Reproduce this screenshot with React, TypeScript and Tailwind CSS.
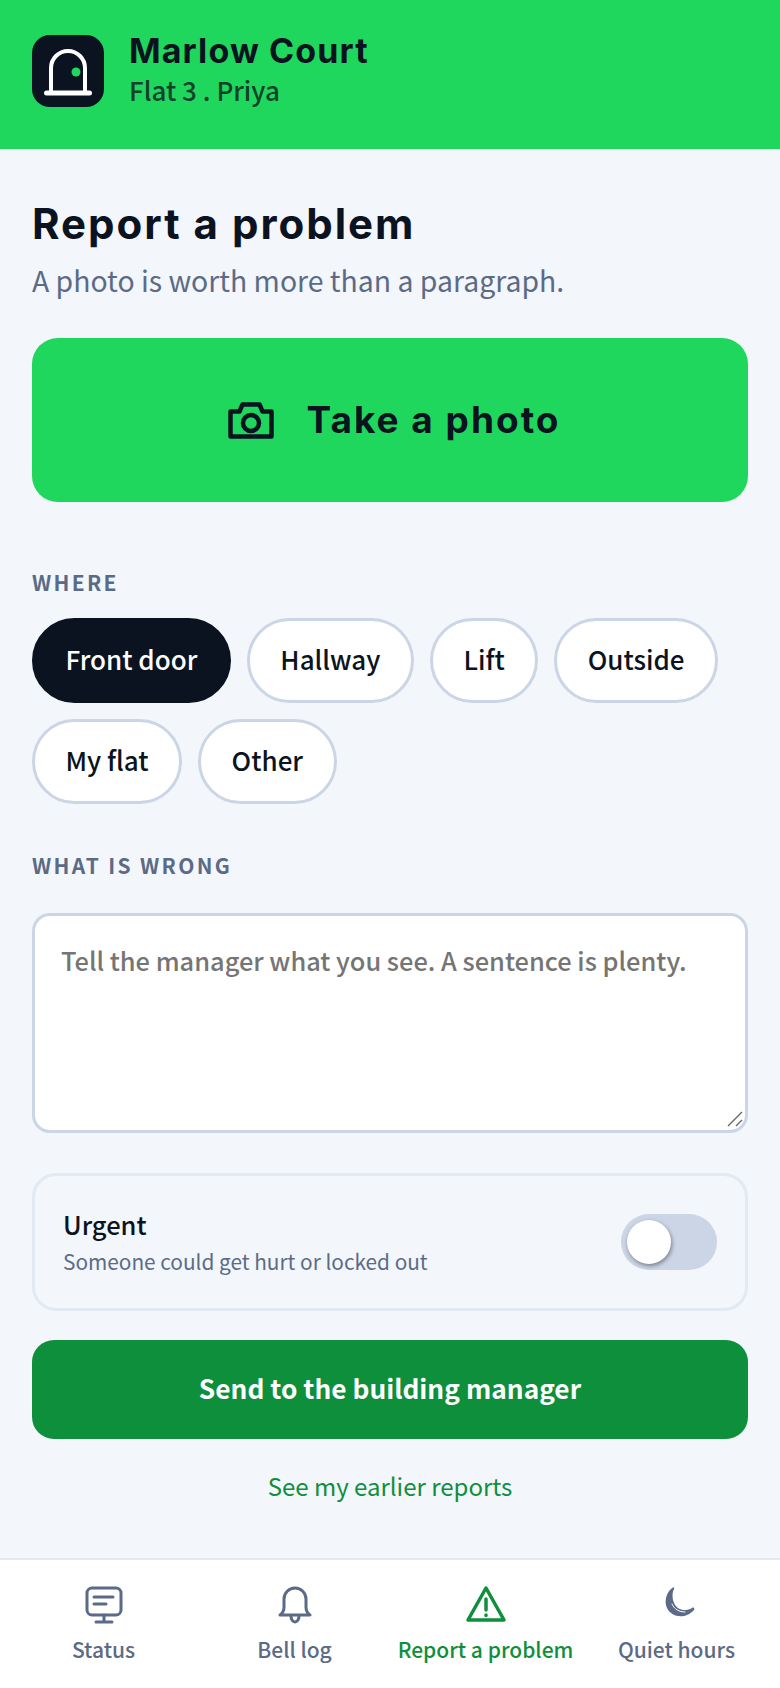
import React from 'react'

const body = { fontFamily: '"Noto Sans CJK SC", "Noto Sans", sans-serif' }

const chips = ['Front door', 'Hallway', 'Lift', 'Outside', 'My flat', 'Other']

function DoorLogo() {
  return (
    <div className="w-[72px] h-[72px] rounded-[18px] bg-[#0b1320] shrink-0">
      <svg width="72" height="72" viewBox="0 0 72 72" fill="none">
        <path d="M19 58V33a17 17 0 0 1 34 0v25" stroke="#fff" strokeWidth="4" />
        <path d="M14.5 58h43" stroke="#fff" strokeWidth="5" strokeLinecap="round" />
        <circle cx="44" cy="37" r="4.5" fill="#20d75e" />
      </svg>
    </div>
  )
}

function Camera() {
  return (
    <svg width="46" height="37" viewBox="0 0 46 37" fill="none" stroke="#0b1320" strokeWidth="4.5" strokeLinejoin="round">
      <path d="M2.5 9.5h9l3-7h17l3 7h9v25h-41z" />
      <circle cx="23" cy="21" r="8" />
    </svg>
  )
}

function StatusIcon() {
  return (
    <svg width="38" height="38" viewBox="0 0 38 38" fill="none" stroke="#5b6b87" strokeWidth="3" strokeLinecap="round" strokeLinejoin="round">
      <rect x="2" y="2" width="34" height="27" rx="5" />
      <path d="M9 11h19M9 18h12M19 29v7M11 36h16" />
    </svg>
  )
}

function BellIcon() {
  return (
    <svg width="34" height="38" viewBox="0 0 34 38" fill="none" stroke="#5b6b87" strokeWidth="3" strokeLinecap="round" strokeLinejoin="round">
      <path d="M2 29c3-2 4-4 4-8v-8a11 11 0 0 1 22 0v8c0 4 1 6 4 8z" />
      <path d="M13 30a4 6 0 0 0 8 0" />
    </svg>
  )
}

function WarnIcon() {
  return (
    <svg className="mb-[2px]" width="42" height="38" viewBox="0 0 42 38" fill="none" stroke="#0e8f3c" strokeWidth="3.5" strokeLinecap="round" strokeLinejoin="round">
      <path d="M21 3 3 35h36z" />
      <path d="M21 14v11M21 30v.5" />
    </svg>
  )
}

function MoonIcon() {
  return (
    <svg className="ml-[6px] mb-[6px]" width="30" height="31" viewBox="0 0 30 31" fill="#5b6b87">
      <path d="M8 .5C1 5-1 15 2 21c4 9 18 12 27 2 1-2-1-3-2-2-7 4-15 2-18-5-2-5-2-10 0-14 .5-1.500 0-2-1-1.500z" />
      <path d="M7 17c2 5 7 8 13 8" stroke="#fff" strokeWidth="1" fill="none" strokeLinecap="round" />
    </svg>
  )
}

function NavItem({ icon, label, active }: { icon: React.ReactNode; label: string; active?: boolean }) {
  return (
    <div className="flex-1 flex flex-col items-center">
      <div className="h-[44px] flex items-center justify-center">{icon}</div>
      <span className={`mt-[8px] text-[21px] leading-[28px] whitespace-nowrap font-medium ${active ? 'text-[#0e8f3c]' : 'text-[#5b6b87]'}`}>
        {label}
      </span>
    </div>
  )
}

export default function App() {
  return (
    <div className="w-[780px] h-[1688px] bg-[#f3f6fb] flex flex-col" style={body}>
      <header className="h-[149px] bg-[#20d75e] flex items-start px-[32px] pt-[35px] gap-[25px] shrink-0">
        <DoorLogo />
        <div className="flex flex-col">
          <h2 className="text-[34px] leading-[40px] font-bold text-[#0b1320] tracking-[1.1px] font-['Inter'] -mt-[4px]">Marlow Court</h2>
          <p className="text-[26px] leading-[32px] font-medium text-[#12432a] mt-[3px]">Flat 3 . Priya</p>
        </div>
      </header>

      <main className="flex-1 px-[32px] pt-[50px] flex flex-col">
        <h1 className="text-[42px] leading-[50px] font-bold text-[#0b1320] tracking-[2px] font-['Inter']">Report a problem</h1>
        <p className="text-[28.4px] leading-[40px] text-[#5b6b87] mt-[11px]">A photo is worth more than a paragraph.</p>

        <button className="mt-[38px] h-[164px] rounded-[26px] bg-[#20d75e] flex items-center justify-center gap-[32px] pl-[9px]">
          <Camera />
          <span className="text-[37px] font-bold text-[#0b1320] tracking-[2px] font-['Inter']">Take a photo</span>
        </button>

        <div className="mt-[66px] text-[21px] leading-[28px] font-semibold tracking-[2.3px] text-[#5b6b87]">WHERE</div>
        <div className="mt-[22px] flex flex-wrap gap-x-[16px] gap-y-[16px]">
          {chips.map((c, i) => (
            <div
              key={c}
              className={`h-[85px] rounded-full px-[30.5px] pb-[4px] flex items-center text-[26px] font-medium border-[3px] ${
                i === 0 ? 'bg-[#0b1320] border-[#0b1320] text-white' : 'bg-white border-[#cbd5e5] text-[#0b1320]'
              }`}
            >
              {c}
            </div>
          ))}
        </div>

        <div className="mt-[47px] text-[21px] leading-[28px] font-semibold tracking-[2.3px] text-[#5b6b87]">WHAT IS WRONG</div>
        <div className="relative mt-[34px]">
          <textarea
            className="h-[220px] w-full rounded-[18px] bg-white border-[3px] border-[#cbd5e5] px-[26px] py-[27px] text-[25.4px] leading-[34px] font-medium placeholder:text-[#757575] outline-none block resize-none"
            placeholder="Tell the manager what you see. A sentence is plenty."
          />
          <svg className="absolute right-[5px] bottom-[6px]" width="16" height="16" viewBox="0 0 16 16" stroke="#666" strokeWidth="1.4">
            <path d="M1 15 15 1M9 15l6-6" />
          </svg>
        </div>

        <div className="mt-[40px] h-[138px] rounded-[24px] border-[3px] border-[#e2e9f3] flex items-center justify-between px-[28px]">
          <div className="-mt-[1px]">
            <div className="text-[25.5px] leading-[32px] font-medium text-[#0b1320]">Urgent</div>
            <div className="text-[20.8px] leading-[30px] text-[#5b6b87] mt-[6px]">Someone could get hurt or locked out</div>
          </div>
          <div className="w-[96px] h-[56px] rounded-full bg-[#cbd5e5] p-[6px]">
            <div className="w-[44px] h-[44px] rounded-full bg-white shadow-[1px_2px_4px_rgba(0,0,0,0.4)]" />
          </div>
        </div>

        <button className="mt-[29px] h-[99px] rounded-[22px] bg-[#0e8f3c] text-white text-[26.3px] font-semibold pb-[4px]">
          Send to the building manager
        </button>
        <div className="mt-[30px] text-center text-[24px] leading-[34px] text-[#0e8f3c]">See my earlier reports</div>
      </main>

      <nav className="h-[130px] shrink-0 bg-white border-t-[2px] border-[#e2e9f3] flex px-[8px] pt-[23px]">
        <NavItem icon={<StatusIcon />} label="Status" />
        <NavItem icon={<BellIcon />} label="Bell log" />
        <NavItem icon={<WarnIcon />} label="Report a problem" active />
        <NavItem icon={<MoonIcon />} label="Quiet hours" />
      </nav>
    </div>
  )
}
